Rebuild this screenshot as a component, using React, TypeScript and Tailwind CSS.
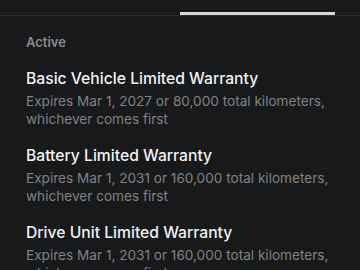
const WARRANTIES = [
  {
    title: "Basic Vehicle Limited Warranty",
    desc: "Expires Mar 1, 2027 or 80,000 total kilometers, whichever comes first",
  },
  {
    title: "Battery Limited Warranty",
    desc: "Expires Mar 1, 2031 or 160,000 total kilometers, whichever comes first",
  },
  {
    title: "Drive Unit Limited Warranty",
    desc: "Expires Mar 1, 2031 or 160,000 total kilometers, whichever comes first",
  },
];

export default function App() {
  return (
    <div
      className="w-[360px] h-[270px] overflow-hidden bg-[#18191b] text-white"
      style={{ fontFamily: "Inter, 'Noto Sans', sans-serif" }}
    >
      {/* tabs */}
      <div className="h-[16px] border-b border-[#2c2d30] flex items-end">
        <div className="w-[180px]" />
        <div className="w-[155px] h-[3px] bg-[#d8d8d8]" />
      </div>

      <div className="px-[26px]">
        <p className="mt-[18px] text-[13px] font-semibold text-[#8a8b8e] leading-4">
          Active
        </p>

        {WARRANTIES.map((w) => (
          <div key={w.title} className="mt-[18px] first-of-type:mt-[19px]">
            <h3 className="text-[15.7px] font-medium leading-5 text-[#f2f2f2]">
              {w.title}
            </h3>
            <p className="mt-[3px] text-[13.6px] leading-[18px] text-[#808184]">
              {w.desc}
            </p>
          </div>
        ))}
      </div>
    </div>
  );
}
